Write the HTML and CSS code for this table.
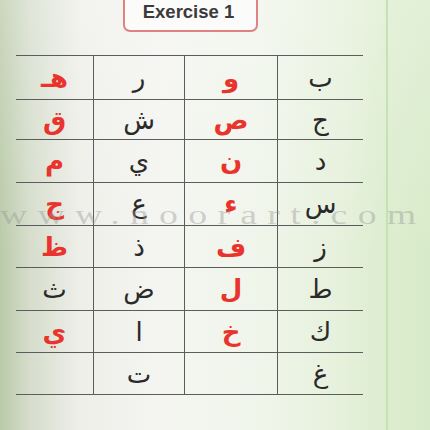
FILE: index.html
```html
<!DOCTYPE html>
<html lang="en">
<head>
<meta charset="utf-8">
<title>Exercise 1</title>
<link rel="stylesheet" href="styles.css">
</head>
<body>
<div class="page">
  <div class="header"><div class="title">Exercise 1</div></div>
  <div class="table">
    <div class="row r1"><div class="c red">هـ</div><div class="c">ر</div><div class="c red">و</div><div class="c">ب</div></div>
    <div class="row r2"><div class="c red">ق</div><div class="c">ش</div><div class="c red">ص</div><div class="c">ج</div></div>
    <div class="row r3"><div class="c red">م</div><div class="c">ي</div><div class="c red">ن</div><div class="c">د</div></div>
    <div class="row r4"><div class="c red">ج</div><div class="c">ع</div><div class="c red">ء</div><div class="c">س</div></div>
    <div class="row r5"><div class="c red">ظ</div><div class="c">ذ</div><div class="c red">ف</div><div class="c">ز</div></div>
    <div class="row r6"><div class="c">ث</div><div class="c">ض</div><div class="c red">ل</div><div class="c">ط</div></div>
    <div class="row r7"><div class="c red">ي</div><div class="c">ا</div><div class="c red">خ</div><div class="c">ك</div></div>
    <div class="row r8"><div class="c"></div><div class="c">ت</div><div class="c"></div><div class="c">غ</div></div>
  </div>
  <div class="watermark">www.noorart.com</div>
</div>
</body>
</html>
```
FILE: styles.css
```css
html, body {
  margin: 0;
  padding: 0;
}
body {
  width: 430px;
  height: 430px;
  overflow: hidden;
  background:
    linear-gradient(90deg, rgba(0,0,0,0) 386px, #c6e2b2 386px, #c6e2b2 388px, rgba(0,0,0,0) 388px),
    linear-gradient(180deg, rgba(255,255,255,0.25) 0%, rgba(255,255,255,0) 60%),
    linear-gradient(90deg, #b9caa8 0px, #d6ddcc 30px, #eeefe9 80px, #f4f5f1 160px, #f0f5ea 260px, #e6f1dc 340px, #dcedcf 386px, #d8ebc9 430px);
  font-family: "Liberation Sans", Arial, sans-serif;
}
.page {
  position: relative;
  width: 430px;
  height: 430px;
}
.header {
  display: flex;
  height: 32px;
  padding-left: 123px;
  overflow: visible;
}
.title {
  width: 135px;
  height: 40px;
  margin-top: -8px;
  border: 2px solid #e08282;
  border-radius: 7px;
  background: #fbfbfa;
  box-sizing: border-box;
  display: flex;
  align-items: flex-end;
  justify-content: center;
  padding-bottom: 7px;
  padding-right: 4px;
  font-weight: bold;
  font-size: 18.5px;
  color: #3d3a3b;
}
.table {
  margin-top: 23px;
  margin-left: 16px;
  width: 347px;
  border-bottom: 1.5px solid #5c5c5c;
}
.row {
  display: grid;
  grid-template-columns: 77px 91px 93px 86px;
  border-top: 1.5px solid #5c5c5c;
  box-sizing: border-box;
}
.r1 { height: 44px; }
.r2 { height: 40px; }
.r3 { height: 43px; }
.r4 { height: 43px; }
.r5 { height: 42px; }
.r6 { height: 43px; }
.r7 { height: 42px; }
.r8 { height: 42px; }
.c {
  display: flex;
  align-items: center;
  justify-content: center;
  font-family: "DejaVu Sans", sans-serif;
  font-size: 26px;
  color: #2b2a2a;
  line-height: 1;
}
.c + .c {
  border-left: 1.5px solid #5c5c5c;
}
.red {
  color: #e8342c;
  font-weight: bold;
}
.watermark {
  position: absolute;
  left: 0;
  top: 201px;
  font-family: "Liberation Serif", "Times New Roman", serif;
  font-size: 28px;
  line-height: 28px;
  letter-spacing: 7.6px;
  color: rgba(150, 150, 150, 0.42);
  white-space: nowrap;
  transform: scaleX(1.35);
  transform-origin: 0 0;
  pointer-events: none;
}
```
